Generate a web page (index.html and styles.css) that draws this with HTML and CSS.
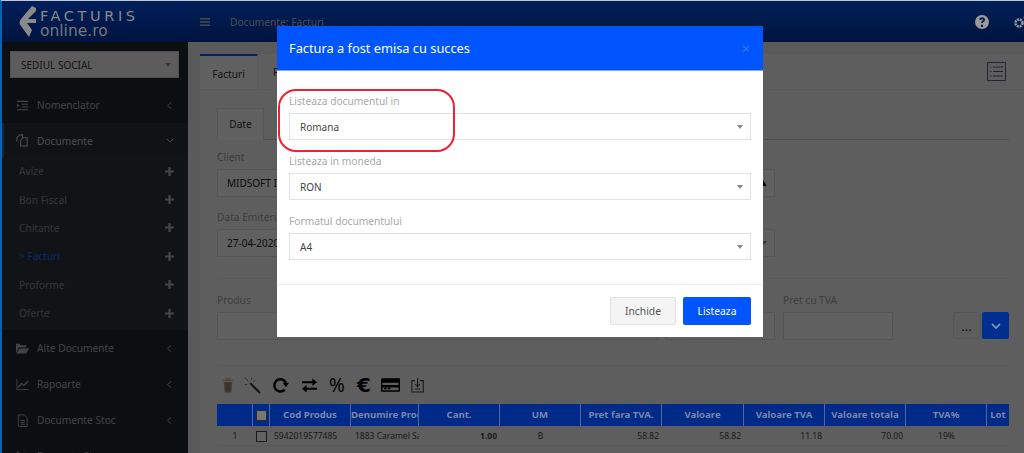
FILE: index.html
```html
<!DOCTYPE html>
<html lang="ro">
<head>
<meta charset="utf-8">
<title>Facturis Online</title>
<link rel="stylesheet" href="styles.css">
</head>
<body>
<div class="page">
  <aside class="sidebar">
    <div class="brand">
      <svg class="brand-mark" viewBox="0 0 18 32"><path d="M14 0 L3 13 Q0 17 3 20 L11 31 L14 24 L9 17 L18 17 L18 13 L10 13 L18 5 L18 2 Z" fill="currentColor"/></svg>
      <div class="brand-text"><span class="brand-top">FACTURIS</span><span class="brand-bottom">online.ro</span></div>
    </div>
    <div class="side-select"><span>SEDIUL SOCIAL</span><i class="caret"></i></div>
    <nav class="menu">
      <div class="menu-item"><svg class="mi" viewBox="0 0 14 14"><path d="M1 2h12v1.2H1zM6 5h7v1.2H6zM6 8h7v1.2H6zM1 11h12v1.2H1zM1 5l3 2-3 2z" fill="currentColor"/></svg><span>Nomenclator</span><svg class="chev" viewBox="0 0 6 10"><path d="M5 1 1 5l4 4" fill="none" stroke="currentColor" stroke-width="1.2"/></svg></div>
      <div class="menu-item active"><svg class="mi" viewBox="0 0 14 14"><path d="M1 8V4l3-3h3v3M5 13V7l2.500-3H12v9z" fill="none" stroke="currentColor" stroke-width="1.2"/></svg><span>Documente</span><svg class="chev" viewBox="0 0 10 6"><path d="M1 1l4 4 4-4" fill="none" stroke="currentColor" stroke-width="1.2"/></svg></div>
      <div class="submenu">
        <div class="sub-item"><span>Avize</span><svg class="plus" viewBox="0 0 10 10"><path d="M3.800 0h2.400v3.800H10v2.400H6.200V10H3.800V6.200H0V3.800h3.800z" fill="currentColor"/></svg></div>
        <div class="sub-item"><span>Bon Fiscal</span><svg class="plus" viewBox="0 0 10 10"><path d="M3.800 0h2.400v3.800H10v2.400H6.200V10H3.800V6.200H0V3.800h3.800z" fill="currentColor"/></svg></div>
        <div class="sub-item"><span>Chitante</span><svg class="plus" viewBox="0 0 10 10"><path d="M3.800 0h2.400v3.800H10v2.400H6.200V10H3.800V6.200H0V3.800h3.800z" fill="currentColor"/></svg></div>
        <div class="sub-item current"><span>&gt; Facturi</span><svg class="plus" viewBox="0 0 10 10"><path d="M3.800 0h2.400v3.800H10v2.400H6.200V10H3.800V6.200H0V3.800h3.800z" fill="currentColor"/></svg></div>
        <div class="sub-item"><span>Proforme</span><svg class="plus" viewBox="0 0 10 10"><path d="M3.800 0h2.400v3.800H10v2.400H6.200V10H3.800V6.200H0V3.800h3.800z" fill="currentColor"/></svg></div>
        <div class="sub-item"><span>Oferte</span><svg class="plus" viewBox="0 0 10 10"><path d="M3.800 0h2.400v3.800H10v2.400H6.200V10H3.800V6.200H0V3.800h3.800z" fill="currentColor"/></svg></div>
      </div>
      <div class="menu-item"><svg class="mi" viewBox="0 0 14 14"><path d="M0 2h4l1 1.500h6V6H3L0 12zM3.500 7H14l-3 5.500H0.500z" fill="currentColor"/></svg><span>Alte Documente</span><svg class="chev" viewBox="0 0 6 10"><path d="M5 1 1 5l4 4" fill="none" stroke="currentColor" stroke-width="1.2"/></svg></div>
      <div class="menu-item"><svg class="mi" viewBox="0 0 14 14"><path d="M1 1v11.500h12.500" fill="none" stroke="currentColor" stroke-width="1"/><path d="M2.500 10 6 6l2.500 2L13 3.500" fill="none" stroke="currentColor" stroke-width="1.500"/></svg><span>Rapoarte</span><svg class="chev" viewBox="0 0 6 10"><path d="M5 1 1 5l4 4" fill="none" stroke="currentColor" stroke-width="1.2"/></svg></div>
      <div class="menu-item"><svg class="mi" viewBox="0 0 14 14"><path d="M2.500 1H9l3 3v9.500H2.500zM5 7h4.500M5 9h4.500M5 11h4.500" fill="none" stroke="currentColor" stroke-width="1"/></svg><span>Documente Stoc</span><svg class="chev" viewBox="0 0 6 10"><path d="M5 1 1 5l4 4" fill="none" stroke="currentColor" stroke-width="1.2"/></svg></div>
      <div class="menu-item"><svg class="mi" viewBox="0 0 14 14"><path d="M2 2v10M6 5v7M10 3v9" fill="none" stroke="currentColor" stroke-width="2"/></svg><span>Rapoarte Stoc</span><svg class="chev" viewBox="0 0 6 10"><path d="M5 1 1 5l4 4" fill="none" stroke="currentColor" stroke-width="1.2"/></svg></div>
    </nav>
  </aside>

  <div class="content">
    <header class="topbar">
      <svg class="burger" viewBox="0 0 10 8"><path d="M0 0h10v1.400H0zM0 3.300h10v1.400H0zM0 6.600h10V8H0z" fill="currentColor"/></svg>
      <span class="crumb">Documente: Facturi</span>
      <div class="top-icons">
        <svg class="help" viewBox="0 0 14 14"><path fill-rule="evenodd" d="M7 0a7 7 0 1 0 0 14A7 7 0 0 0 7 0zM6 9.800h2V12H6zM4.300 5C4.400 3.300 5.600 2.300 7.200 2.300c1.600 0 2.800 1 2.800 2.400 0 1.200-.7 1.700-1.300 2.100-.5.300-.7.600-.7 1.300H6.100c0-1.200.4-1.800 1.100-2.300.5-.3.800-.6.800-1 0-.4-.3-.7-.8-.7-.6 0-.9.400-1 1z" fill="currentColor"/></svg>
        <svg class="gears" viewBox="0 0 18 16"><circle cx="6" cy="9" r="3.500" fill="none" stroke="currentColor" stroke-width="2.500" stroke-dasharray="2 .8"/><circle cx="14" cy="4" r="2.500" fill="none" stroke="currentColor" stroke-width="2" stroke-dasharray="1.600 .8"/><circle cx="14" cy="13" r="2" fill="none" stroke="currentColor" stroke-width="1.500"/></svg>
      </div>
    </header>
    <main class="card">
      <div class="tabbar">
        <div class="tab tab-active">Facturi</div>
        <div class="tab tab-next">Facturi recurente</div>
        <svg class="list-icon" viewBox="0 0 19 19"><path d="M.5.500h18v18H.5z" fill="none" stroke="currentColor"/><path d="M6 5h10M6 9.500h10M6 14h10M3 5h1.500M3 9.500h1.500M3 14h1.500" stroke="currentColor"/></svg>
      </div>
      <div class="pane">
        <div class="subtabs"><div class="subtab">Date</div></div>
        <div class="group"><label>Client</label><div class="field"><span>MIDSOFT IT GROUP</span><svg class="user-ic" viewBox="0 0 8 8"><path d="M2 4 4 1l2 3 1.500 3H.5z" fill="currentColor"/></svg></div></div>
        <div class="group"><label>Data Emiterii</label><div class="field"><span>27-04-2020</span><i class="caret"></i></div></div>
        <div class="rule"></div>
        <div class="product">
          <div class="col-a"><label>Produs</label><div class="field"></div></div>
          <div class="col-b"><label>&nbsp;</label><div class="field"></div></div>
          <div class="col-c"><label>Pret cu TVA</label><div class="field"></div></div>
          <div class="prod-btns"><button class="btn-dots">...</button><button class="btn-drop"><svg viewBox="0 0 10 6"><path d="M1 1l4 4 4-4" fill="none" stroke="currentColor" stroke-width="1.600"/></svg></button></div>
        </div>
        <div class="rule rule-2"></div>
        <div class="toolbar">
          <svg class="t-ic trash" viewBox="0 0 14 18"><path d="M1 3h12M5 3V1h4v2" fill="none" stroke="#c9a98a" stroke-width="1.400"/><path d="M2 4.500h10l-1 13H3z" fill="#b39f8c"/><path d="M5 6v10M7 6v10M9 6v10" stroke="#5a5a5a" stroke-width=".8"/></svg>
          <svg class="t-ic wand" viewBox="0 0 18 18"><path d="M6.500 6.500 17 17" stroke="#333" stroke-width="2.200"/><path d="M3 3l2 2M8 1v2.500M1 8h2.500M1.500 1 3 3M10 4.500 12 3" stroke="#222" stroke-width=".9" stroke-dasharray="1.500 .8"/></svg>
          <svg class="t-ic refresh" viewBox="0 0 18 18"><path d="M13.500 13.500A6.500 6.500 0 1 1 14.800 6" fill="none" stroke="#000" stroke-width="2.600"/><path d="M11.300 6H18l-3.200 4.800z" fill="#000"/></svg>
          <svg class="t-ic arrows" viewBox="0 0 18 18"><path d="M1 5.500h13M4 12.500h13" stroke="#000" stroke-width="2"/><path d="M12 1.500l5 4-5 4zM6 8.500l-5 4 5 4z" fill="#000"/></svg>
          <span class="t-glyph">%</span>
          <span class="t-glyph euro">€</span>
          <svg class="t-ic card-ic" viewBox="0 0 20 14"><path fill-rule="evenodd" d="M1 0h18a1 1 0 0 1 1 1v12a1 1 0 0 1-1 1H1a1 1 0 0 1-1-1V1a1 1 0 0 1 1-1zM1.500 4.500v2.500h17V4.500zM1.500 9.500v3h17v-3z" fill="#000"/><path d="M3 10h3v1.500H3zM7 10h3v1.500H7z" fill="#000"/></svg>
          <svg class="t-ic save-ic" viewBox="0 0 16 18"><path d="M4.500 4H1v13h13V4h-3.500" fill="none" stroke="#3a3a3a" stroke-width="1.200"/><path d="M7.500 1v9M5 8l2.500 3L10 8M4.500 13.500h6" fill="none" stroke="#3a3a3a" stroke-width="1.200"/></svg>
        </div>
        <div class="grid-table">
          <div class="row head">
            <div></div><div class="check-cell"><i class="box box-head"></i></div><div>Cod Produs</div><div class="clip">Denumire Produs</div><div>Cant.</div><div>UM</div><div>Pret fara TVA.</div><div>Valoare</div><div>Valoare TVA</div><div>Valoare totala</div><div>TVA%</div><div class="clip">Lot</div>
          </div>
          <div class="row body-row">
            <div class="c">1</div><div class="check-cell"><i class="box"></i></div><div class="l">5942019577485</div><div class="l clip">1883 Caramel Sare</div><div class="r b">1.00</div><div class="c">B</div><div class="r">58.82</div><div class="r">58.82</div><div class="r">11.18</div><div class="r">70.00</div><div class="c">19%</div><div></div>
          </div>
        </div>
      </div>
    </main>
  </div>

  <div class="overlay"></div>

  <section class="modal">
    <div class="modal-head"><h2>Factura a fost emisa cu succes</h2><span class="close">×</span></div>
    <div class="modal-body">
      <div class="m-group"><label>Listeaza documentul in</label><div class="m-field"><span>Romana</span><i class="caret"></i></div></div>
      <div class="m-group"><label>Listeaza in moneda</label><div class="m-field"><span>RON</span><i class="caret"></i></div></div>
      <div class="m-group"><label>Formatul documentului</label><div class="m-field"><span>A4</span><i class="caret"></i></div></div>
    </div>
    <div class="modal-foot"><button class="btn-close">Inchide</button><button class="btn-list">Listeaza</button></div>
    <div class="annot"></div>
  </section>
</div>
</body>
</html>
```
FILE: styles.css
```css
* { box-sizing: border-box; }
html, body { margin: 0; padding: 0; height: 453px; overflow: hidden; }
body {
  font-family: "Noto Sans", sans-serif;
  font-size: 10.200px;
  color: #444;
  border-top: 1px solid #c4c8cc;
  border-left: 2px solid #0b62ae;
  background: #000;
}
.page { position: relative; display: flex; height: 452px; width: 1022px; overflow: hidden; }
.overlay { position: absolute; inset: 0; background: rgba(0,0,0,.6); }

.sidebar { width: 186px; flex: none; background: #20272d; color: #a6adb3; }
.brand {
  height: 41px; display: flex; align-items: center; gap: 4px; padding-left: 16px;
  background: linear-gradient(#001f5c, #00143f);
  color: #8a8a8a;
  position: relative; z-index: 2;
}
.brand-mark { width: 18px; height: 32px; flex: none; }
.brand-text { display: flex; flex-direction: column; margin-top: 4px; }
.brand-top { font-family: "DejaVu Sans", sans-serif; font-size: 14.500px; letter-spacing: 3.600px; line-height: 15px; }
.brand-bottom { font-family: "DejaVu Sans", sans-serif; font-size: 15.500px; line-height: 14px; color: #777; }
.side-select {
  margin: 9px 9px 0 8px; height: 27px; background: #e6e6e6; border: 1px solid #c8c8c8;
  display: flex; align-items: center; justify-content: space-between; padding: 0 7px 0 10px;
  color: #333; font-size: 10px;
}
.caret { width: 0; height: 0; border-left: 3.500px solid transparent; border-right: 3.500px solid transparent; border-top: 4.500px solid #888; flex: none; }
.menu { margin-top: 9px; }
.menu-item { height: 36px; display: flex; align-items: center; padding-left: 14px; padding-right: 16px; gap: 8px; font-size: 10.200px; color: #a0a7ad; }
.menu-item span { flex: 1; }
.menu-item.active { color: #b8bec3; background: #2a3137; box-shadow: inset 2px 0 0 #0b6ec4; height: 34px; padding-top: 1px; }
.mi { width: 13px; height: 13px; flex: none; }
.chev { width: 5px; height: 9px; flex: none; }
.menu-item.active .chev { width: 8px; height: 5px; margin-right: -2px; }
.submenu { background: #2b3339; height: 173px; }
.sub-item { height: 28.400px; display: flex; align-items: center; justify-content: space-between; padding: 0 14px 0 17px; color: #7f878d; font-size: 10.200px; }
.sub-item.current { color: #0a66ff; }
.plus { width: 9px; height: 9px; color: #a8aeb3; }

.content { flex: 1; min-width: 0; background: #e2e2e2; }
.topbar {
  height: 41px; display: flex; align-items: center; padding-left: 12px;
  background: linear-gradient(#0050dc, #00349a);
  color: #b4bccc;
}
.burger { width: 10px; height: 8px; margin-right: 20px; }
.crumb { font-size: 10.200px; }
.top-icons { margin-left: auto; display: flex; align-items: center; gap: 24px; margin-right: -7px; color: #9a9a9a; position: relative; z-index: 2; }
.help { width: 14px; height: 14px; }
.gears { width: 18px; height: 16px; }

.card { margin: 12px 0 0 12px; background: #ececec; height: 420px; }
.tabbar { height: 36px; display: flex; align-items: stretch; border-bottom: 1px solid #e2e2e2; padding-right: 18px; }
.tab { width: 58px; padding-top: 11px; text-align: center; font-size: 10.200px; color: #333; border-right: 1px solid #e0e0e0; }
.tab-active { border-top: 2px solid #0055ff; background: #f2f2f2; }
.tab-next { width: auto; padding-left: 15px; padding-right: 15px; }
.list-icon { width: 19px; height: 19px; margin: 8px 0 0 auto; color: #55557a; }
.pane { padding: 18px 15px 0 17px; }
.subtabs { height: 32px; border-bottom: 1px solid #c4c4c4; display: flex; margin-bottom: 9px; }
.subtab { width: 47px; height: 32px; border: 1px solid #d8d8d8; border-bottom: 0; background: #f2f2f2; text-align: center; line-height: 31px; color: #333; }
label { display: block; font-size: 10.200px; line-height: 16px; color: #999; }
.group { width: 558px; margin-bottom: 12px; }
.group label { margin-bottom: 4px; }
.field { height: 28px; border: 1px solid #d4d4d4; background: #f0f0f0; display: flex; align-items: center; justify-content: space-between; padding: 0 7px 0 9px; color: #222; font-size: 10px; }
.user-ic { width: 8px; height: 8px; color: #111; }
.rule { height: 1px; background: #e2e2e2; margin-top: 21px; }
.rule-2 { margin-top: 25px; }
.product { display: flex; gap: 8px; margin-top: 13px; }
.product label { margin-bottom: 4px; }
.col-a { width: 441px; }
.col-b { width: 109px; }
.col-c { width: 110px; }
.prod-btns { margin-left: auto; display: flex; gap: 2px; align-items: flex-end; padding-bottom: 1px; }
.prod-btns button { width: 27px; height: 27px; border-radius: 2px; padding: 0; font-family: inherit; }
.btn-dots { background: #e8e8e8; border: 1px solid #d8d8d8; color: #333; }
.btn-drop { background: #002f90; border: 0; color: #8d9cbc; position: relative; z-index: 2; }
.btn-drop svg { width: 10px; height: 6px; display: block; margin: auto; }
.toolbar { display: flex; align-items: center; height: 20px; margin-top: 9px; padding-left: 5px; }
.t-ic { flex: none; height: 17px; }
.trash { width: 12px; margin-right: 10px; }
.wand { width: 17px; margin-right: 11px; }
.refresh { width: 17px; margin-right: 12px; }
.arrows { width: 17px; margin-right: 11px; }
.t-glyph { font-size: 19px; line-height: 20px; color: #000; margin-right: 12px; width: 16px; text-align: center; font-weight: 400; }
.euro { font-family: "DejaVu Sans", sans-serif; font-size: 20px; font-weight: 700; width: 14px; margin-right: 10px; }
.card-ic { width: 19px; height: 14px; margin-right: 11px; }
.save-ic { width: 14px; height: 16px; }
.grid-table { margin-top: 9px; }
.row { display: grid; grid-template-columns: 36px 17px 81px 68px 81px 81px 81px 82px 81px 81px 81px 22px; }
.head { height: 22px; background: #002a88; color: #7888ab; font-weight: 700; font-size: 9.600px; line-height: 21px; text-align: center; position: relative; z-index: 2; }
.head > div { border-right: 1px solid #52669a; }
.head > div:last-child { border-right: 0; }
.clip { overflow: hidden; white-space: nowrap; }
.check-cell { display: flex; align-items: center; justify-content: center; }
.box { width: 11px; height: 11px; border: 1px solid #444; background: #f4f4f4; display: block; }
.box-head { background: #777; border-color: #2a2a2a; }
.body-row { height: 20px; line-height: 20px; font-size: 8.500px; color: #444; border-bottom: 1px solid #e0e0e0; }
.c { text-align: center; }
.l { padding-left: 4px; }
.r { text-align: right; padding-right: 3px; }
.b { font-weight: 700; }

.modal { position: absolute; left: 275px; top: 25px; width: 486px; height: 311px; background: #fff; z-index: 3; }
.modal-head { height: 45px; background: #0055ff; display: flex; align-items: center; justify-content: space-between; padding: 0 13px 0 12px; border-bottom: 1px solid #7ea6f4; }
.modal-head h2 { margin: 0; font-size: 12.800px; font-weight: 400; color: #fff; }
.close { font-size: 14px; color: #3a78e8; }
.modal-body { padding: 22px 12px 24px; }
.m-group { margin-bottom: 13px; }
.m-group:last-child { margin-bottom: 0; }
.m-group label { color: #a8a8a8; margin-bottom: 4px; height: 16px; }
.m-field { height: 27px; border: 1px solid #e2e2ea; display: flex; align-items: center; justify-content: space-between; padding: 0 7px 0 10px; color: #444; font-size: 10px; }
.modal-foot { border-top: 1px solid #eee; height: 53px; padding: 12px; display: flex; justify-content: flex-end; gap: 7px; }
.modal-foot button { height: 28px; border-radius: 2px; font-family: inherit; font-size: 10.300px; padding: 0; }
.btn-close { width: 66px; background: #f4f4f4; border: 1px solid #e2e2e2; color: #555; }
.btn-list { width: 68px; background: #0055ff; border: 0; color: #fff; }
.annot { position: absolute; left: 1px; top: 63px; width: 177px; height: 63px; border: 2.500px solid #ee2233; border-radius: 18px; }
```
